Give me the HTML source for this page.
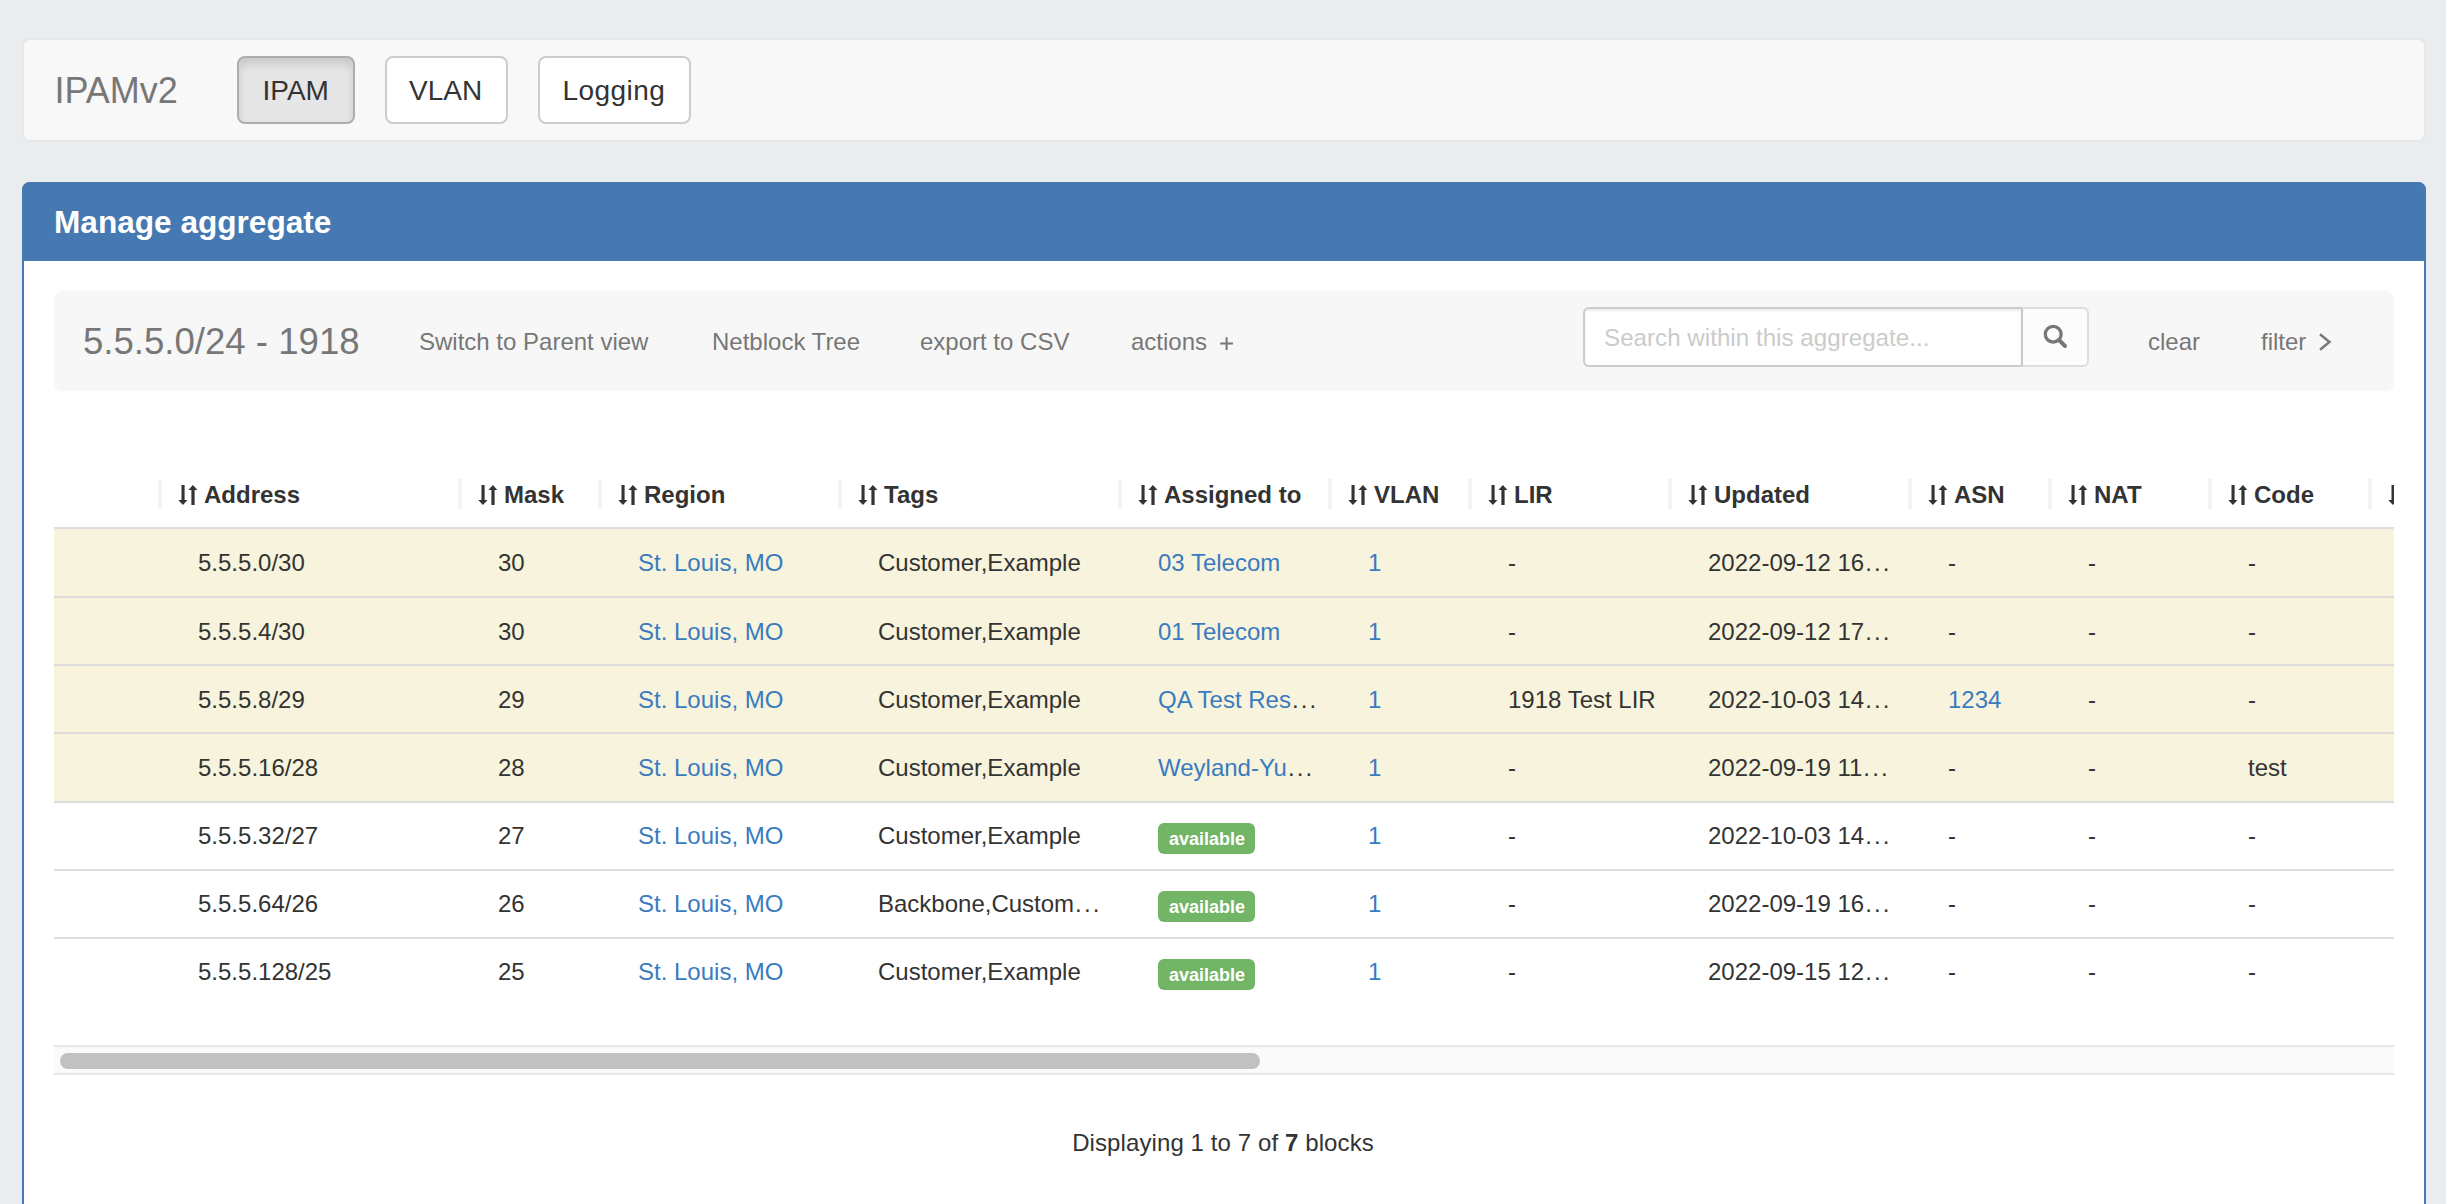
<!DOCTYPE html>
<html><head><meta charset="utf-8"><title>IPAMv2 - Manage aggregate</title>
<style>
html,body{margin:0;padding:0;}
body{width:2446px;height:1204px;overflow:hidden;background:#e9edf0;position:relative;font-family:'Liberation Sans', sans-serif;}
.box{position:absolute;box-sizing:border-box;}
.t{position:absolute;white-space:nowrap;font-family:'Liberation Sans', sans-serif;}
.btn{background:#fff;border:2px solid #ccc;border-radius:8px;}
.btnact{background:#e6e6e6;border:2px solid #adadad;border-radius:8px;box-shadow:inset 0 6px 10px rgba(0,0,0,.125);}
.badge{width:97px;height:31px;background:#72b566;border-radius:6px;}
svg{display:block}
</style></head><body>
<div class="box" style="left:22px;top:38px;width:2404px;height:104px;background:#f8f8f8;border:2px solid #e7e7e7;border-radius:8px;"></div>
<div class="t" style="left:54.5px;top:73.0px;font-size:36px;line-height:36px;color:#777;font-weight:normal;">IPAMv2</div>
<div class="box btnact" style="left:237px;top:56px;width:118px;height:68px;"></div>
<div class="t" style="left:262.5px;top:77.0px;font-size:28px;line-height:28px;color:#333;font-weight:normal;">IPAM</div>
<div class="box btn" style="left:385px;top:56px;width:123px;height:68px;"></div>
<div class="t" style="left:409.0px;top:77.0px;font-size:28px;line-height:28px;color:#333;font-weight:normal;">VLAN</div>
<div class="box btn" style="left:538px;top:56px;width:153px;height:68px;"></div>
<div class="t" style="left:562.5px;top:77.0px;font-size:28px;line-height:28px;color:#333;font-weight:normal;letter-spacing:0.45px;">Logging</div>
<div class="box" style="left:22px;top:182px;width:2404px;height:1100px;background:#fff;border:2px solid #4679b2;border-radius:8px;"></div>
<div class="box" style="left:22px;top:182px;width:2404px;height:79px;background:#4679b2;border-radius:8px 8px 0 0;"></div>
<div class="t" style="left:54.0px;top:207.0px;font-size:31.6px;line-height:31.6px;color:#fff;font-weight:bold;">Manage aggregate</div>
<div class="box" style="left:54px;top:291px;width:2340px;height:100px;background:#f7f7f7;border-radius:8px;"></div>
<div class="t" style="left:83.0px;top:324.0px;font-size:36.6px;line-height:36.6px;color:#777;font-weight:normal;">5.5.5.0/24 - 1918</div>
<div class="t" style="left:419.0px;top:330.0px;font-size:24px;line-height:24px;color:#777;font-weight:normal;">Switch to Parent view</div>
<div class="t" style="left:712.0px;top:330.0px;font-size:24px;line-height:24px;color:#777;font-weight:normal;">Netblock Tree</div>
<div class="t" style="left:920.0px;top:330.0px;font-size:24px;line-height:24px;color:#777;font-weight:normal;">export to CSV</div>
<div class="t" style="left:1131.0px;top:330.0px;font-size:24px;line-height:24px;color:#777;font-weight:normal;">actions</div>
<div class="t" style="left:2148.0px;top:330.0px;font-size:24px;line-height:24px;color:#777;font-weight:normal;">clear</div>
<div class="t" style="left:2261.0px;top:330.0px;font-size:24px;line-height:24px;color:#777;font-weight:normal;">filter</div>
<svg class="box" style="left:2316px;top:332px" width="18" height="20" viewBox="0 0 18 20"><path d="M4 2.2 L13.5 10 L4 17.8" fill="none" stroke="#777" stroke-width="2.4"/></svg>
<svg class="box" style="left:1219px;top:336px" width="16" height="16" viewBox="0 0 16 16"><path d="M1.2 7.5 H14 M7.6 1.3 V14" stroke="#777" stroke-width="2"/></svg>
<div class="box" style="left:1583px;top:307px;width:440px;height:60px;background:#fff;border:2px solid #ccc;border-radius:6px 0 0 6px;box-shadow:inset 0 2px 2px rgba(0,0,0,.075);"></div>
<div class="t" style="left:1604.0px;top:326.0px;font-size:24.2px;line-height:24.2px;color:#cbcbcb;font-weight:normal;">Search within this aggregate...</div>
<div class="box" style="left:2021px;top:307px;width:68px;height:60px;background:#fcfcfc;border:2px solid #ddd;border-left:2px solid #c8c8c8;border-radius:0 6px 6px 0;"></div>
<svg class="box" style="left:2038px;top:319px" width="32" height="34" viewBox="0 0 32 34"><circle cx="15.2" cy="15.2" r="7.9" fill="none" stroke="#777" stroke-width="3.3"/><path d="M21 21 L27 27" stroke="#777" stroke-width="3.9" stroke-linecap="round"/></svg>
<div class="box" style="left:54px;top:440px;width:2340px;height:640px;overflow:hidden;">
<div class="box" style="left:104px;top:39px;width:4px;height:30px;background:#f3f3f3;"></div>
<div class="box" style="left:124px;top:44px;width:20px;height:22px;"><svg width="20" height="22" viewBox="0 0 20 22"><rect x="3.5" y="1" width="3.1" height="15.5" fill="#333"/><polygon points="0.3,16 9.5,16 4.9,21" fill="#333"/><polygon points="10.4,6 19.4,6 14.9,1" fill="#333"/><rect x="13.4" y="5.5" width="3.2" height="15.5" fill="#333"/></svg></div>
<div class="t" style="left:150.0px;top:43.0px;font-size:24px;line-height:24px;color:#333;font-weight:bold;">Address</div>
<div class="box" style="left:404px;top:39px;width:4px;height:30px;background:#f3f3f3;"></div>
<div class="box" style="left:424px;top:44px;width:20px;height:22px;"><svg width="20" height="22" viewBox="0 0 20 22"><rect x="3.5" y="1" width="3.1" height="15.5" fill="#333"/><polygon points="0.3,16 9.5,16 4.9,21" fill="#333"/><polygon points="10.4,6 19.4,6 14.9,1" fill="#333"/><rect x="13.4" y="5.5" width="3.2" height="15.5" fill="#333"/></svg></div>
<div class="t" style="left:450.0px;top:43.0px;font-size:24px;line-height:24px;color:#333;font-weight:bold;">Mask</div>
<div class="box" style="left:544px;top:39px;width:4px;height:30px;background:#f3f3f3;"></div>
<div class="box" style="left:564px;top:44px;width:20px;height:22px;"><svg width="20" height="22" viewBox="0 0 20 22"><rect x="3.5" y="1" width="3.1" height="15.5" fill="#333"/><polygon points="0.3,16 9.5,16 4.9,21" fill="#333"/><polygon points="10.4,6 19.4,6 14.9,1" fill="#333"/><rect x="13.4" y="5.5" width="3.2" height="15.5" fill="#333"/></svg></div>
<div class="t" style="left:590.0px;top:43.0px;font-size:24px;line-height:24px;color:#333;font-weight:bold;">Region</div>
<div class="box" style="left:784px;top:39px;width:4px;height:30px;background:#f3f3f3;"></div>
<div class="box" style="left:804px;top:44px;width:20px;height:22px;"><svg width="20" height="22" viewBox="0 0 20 22"><rect x="3.5" y="1" width="3.1" height="15.5" fill="#333"/><polygon points="0.3,16 9.5,16 4.9,21" fill="#333"/><polygon points="10.4,6 19.4,6 14.9,1" fill="#333"/><rect x="13.4" y="5.5" width="3.2" height="15.5" fill="#333"/></svg></div>
<div class="t" style="left:830.0px;top:43.0px;font-size:24px;line-height:24px;color:#333;font-weight:bold;">Tags</div>
<div class="box" style="left:1064px;top:39px;width:4px;height:30px;background:#f3f3f3;"></div>
<div class="box" style="left:1084px;top:44px;width:20px;height:22px;"><svg width="20" height="22" viewBox="0 0 20 22"><rect x="3.5" y="1" width="3.1" height="15.5" fill="#333"/><polygon points="0.3,16 9.5,16 4.9,21" fill="#333"/><polygon points="10.4,6 19.4,6 14.9,1" fill="#333"/><rect x="13.4" y="5.5" width="3.2" height="15.5" fill="#333"/></svg></div>
<div class="t" style="left:1110.0px;top:43.0px;font-size:24px;line-height:24px;color:#333;font-weight:bold;">Assigned to</div>
<div class="box" style="left:1274px;top:39px;width:4px;height:30px;background:#f3f3f3;"></div>
<div class="box" style="left:1294px;top:44px;width:20px;height:22px;"><svg width="20" height="22" viewBox="0 0 20 22"><rect x="3.5" y="1" width="3.1" height="15.5" fill="#333"/><polygon points="0.3,16 9.5,16 4.9,21" fill="#333"/><polygon points="10.4,6 19.4,6 14.9,1" fill="#333"/><rect x="13.4" y="5.5" width="3.2" height="15.5" fill="#333"/></svg></div>
<div class="t" style="left:1320.0px;top:43.0px;font-size:24px;line-height:24px;color:#333;font-weight:bold;">VLAN</div>
<div class="box" style="left:1414px;top:39px;width:4px;height:30px;background:#f3f3f3;"></div>
<div class="box" style="left:1434px;top:44px;width:20px;height:22px;"><svg width="20" height="22" viewBox="0 0 20 22"><rect x="3.5" y="1" width="3.1" height="15.5" fill="#333"/><polygon points="0.3,16 9.5,16 4.9,21" fill="#333"/><polygon points="10.4,6 19.4,6 14.9,1" fill="#333"/><rect x="13.4" y="5.5" width="3.2" height="15.5" fill="#333"/></svg></div>
<div class="t" style="left:1460.0px;top:43.0px;font-size:24px;line-height:24px;color:#333;font-weight:bold;">LIR</div>
<div class="box" style="left:1614px;top:39px;width:4px;height:30px;background:#f3f3f3;"></div>
<div class="box" style="left:1634px;top:44px;width:20px;height:22px;"><svg width="20" height="22" viewBox="0 0 20 22"><rect x="3.5" y="1" width="3.1" height="15.5" fill="#333"/><polygon points="0.3,16 9.5,16 4.9,21" fill="#333"/><polygon points="10.4,6 19.4,6 14.9,1" fill="#333"/><rect x="13.4" y="5.5" width="3.2" height="15.5" fill="#333"/></svg></div>
<div class="t" style="left:1660.0px;top:43.0px;font-size:24px;line-height:24px;color:#333;font-weight:bold;">Updated</div>
<div class="box" style="left:1854px;top:39px;width:4px;height:30px;background:#f3f3f3;"></div>
<div class="box" style="left:1874px;top:44px;width:20px;height:22px;"><svg width="20" height="22" viewBox="0 0 20 22"><rect x="3.5" y="1" width="3.1" height="15.5" fill="#333"/><polygon points="0.3,16 9.5,16 4.9,21" fill="#333"/><polygon points="10.4,6 19.4,6 14.9,1" fill="#333"/><rect x="13.4" y="5.5" width="3.2" height="15.5" fill="#333"/></svg></div>
<div class="t" style="left:1900.0px;top:43.0px;font-size:24px;line-height:24px;color:#333;font-weight:bold;">ASN</div>
<div class="box" style="left:1994px;top:39px;width:4px;height:30px;background:#f3f3f3;"></div>
<div class="box" style="left:2014px;top:44px;width:20px;height:22px;"><svg width="20" height="22" viewBox="0 0 20 22"><rect x="3.5" y="1" width="3.1" height="15.5" fill="#333"/><polygon points="0.3,16 9.5,16 4.9,21" fill="#333"/><polygon points="10.4,6 19.4,6 14.9,1" fill="#333"/><rect x="13.4" y="5.5" width="3.2" height="15.5" fill="#333"/></svg></div>
<div class="t" style="left:2040.0px;top:43.0px;font-size:24px;line-height:24px;color:#333;font-weight:bold;">NAT</div>
<div class="box" style="left:2154px;top:39px;width:4px;height:30px;background:#f3f3f3;"></div>
<div class="box" style="left:2174px;top:44px;width:20px;height:22px;"><svg width="20" height="22" viewBox="0 0 20 22"><rect x="3.5" y="1" width="3.1" height="15.5" fill="#333"/><polygon points="0.3,16 9.5,16 4.9,21" fill="#333"/><polygon points="10.4,6 19.4,6 14.9,1" fill="#333"/><rect x="13.4" y="5.5" width="3.2" height="15.5" fill="#333"/></svg></div>
<div class="t" style="left:2200.0px;top:43.0px;font-size:24px;line-height:24px;color:#333;font-weight:bold;">Code</div>
<div class="box" style="left:2314px;top:39px;width:4px;height:30px;background:#f3f3f3;"></div>
<div class="box" style="left:2334px;top:44px;width:20px;height:22px;"><svg width="20" height="22" viewBox="0 0 20 22"><rect x="3.5" y="1" width="3.1" height="15.5" fill="#333"/><polygon points="0.3,16 9.5,16 4.9,21" fill="#333"/><polygon points="10.4,6 19.4,6 14.9,1" fill="#333"/><rect x="13.4" y="5.5" width="3.2" height="15.5" fill="#333"/></svg></div>
<div class="box" style="left:0;top:87px;width:2340px;height:2px;background:#ddd;"></div>
<div class="box" style="left:0;top:89px;width:2340px;height:67px;background:#f7f3dc;"></div>
<div class="box" style="left:0;top:158px;width:2340px;height:66px;background:#f7f3dc;"></div>
<div class="box" style="left:0;top:226px;width:2340px;height:66px;background:#f7f3dc;"></div>
<div class="box" style="left:0;top:294px;width:2340px;height:67px;background:#f7f3dc;"></div>
<div class="box" style="left:0;top:156px;width:2340px;height:2px;background:#ddd;"></div>
<div class="box" style="left:0;top:224px;width:2340px;height:2px;background:#ddd;"></div>
<div class="box" style="left:0;top:292px;width:2340px;height:2px;background:#ddd;"></div>
<div class="box" style="left:0;top:361px;width:2340px;height:2px;background:#ddd;"></div>
<div class="box" style="left:0;top:429px;width:2340px;height:2px;background:#ddd;"></div>
<div class="box" style="left:0;top:497px;width:2340px;height:2px;background:#ddd;"></div>
<div class="t" style="left:144.0px;top:111.0px;font-size:24px;line-height:24px;color:#333;font-weight:normal;">5.5.5.0/30</div>
<div class="t" style="left:444.0px;top:111.0px;font-size:24px;line-height:24px;color:#333;font-weight:normal;">30</div>
<div class="t" style="left:584.0px;top:111.0px;font-size:24px;line-height:24px;color:#3a7bbf;font-weight:normal;">St. Louis, MO</div>
<div class="t" style="left:824.0px;top:111.0px;font-size:24px;line-height:24px;color:#333;font-weight:normal;">Customer,Example</div>
<div class="t" style="left:1104.0px;top:111.0px;font-size:24px;line-height:24px;color:#3a7bbf;font-weight:normal;">03 Telecom</div>
<div class="t" style="left:1314.0px;top:111.0px;font-size:24px;line-height:24px;color:#3a7bbf;font-weight:normal;">1</div>
<div class="t" style="left:1454.0px;top:111.0px;font-size:24px;line-height:24px;color:#333;font-weight:normal;">-</div>
<div class="t" style="left:1654.0px;top:111.0px;font-size:24px;line-height:24px;color:#333;font-weight:normal;">2022-09-12 16<span style="letter-spacing:2.1px;margin-left:1px;color:#333">...</span></div>
<div class="t" style="left:1894.0px;top:111.0px;font-size:24px;line-height:24px;color:#333;font-weight:normal;">-</div>
<div class="t" style="left:2034.0px;top:111.0px;font-size:24px;line-height:24px;color:#333;font-weight:normal;">-</div>
<div class="t" style="left:2194.0px;top:111.0px;font-size:24px;line-height:24px;color:#333;font-weight:normal;">-</div>
<div class="t" style="left:144.0px;top:180.0px;font-size:24px;line-height:24px;color:#333;font-weight:normal;">5.5.5.4/30</div>
<div class="t" style="left:444.0px;top:180.0px;font-size:24px;line-height:24px;color:#333;font-weight:normal;">30</div>
<div class="t" style="left:584.0px;top:180.0px;font-size:24px;line-height:24px;color:#3a7bbf;font-weight:normal;">St. Louis, MO</div>
<div class="t" style="left:824.0px;top:180.0px;font-size:24px;line-height:24px;color:#333;font-weight:normal;">Customer,Example</div>
<div class="t" style="left:1104.0px;top:180.0px;font-size:24px;line-height:24px;color:#3a7bbf;font-weight:normal;">01 Telecom</div>
<div class="t" style="left:1314.0px;top:180.0px;font-size:24px;line-height:24px;color:#3a7bbf;font-weight:normal;">1</div>
<div class="t" style="left:1454.0px;top:180.0px;font-size:24px;line-height:24px;color:#333;font-weight:normal;">-</div>
<div class="t" style="left:1654.0px;top:180.0px;font-size:24px;line-height:24px;color:#333;font-weight:normal;">2022-09-12 17<span style="letter-spacing:2.1px;margin-left:1px;color:#333">...</span></div>
<div class="t" style="left:1894.0px;top:180.0px;font-size:24px;line-height:24px;color:#333;font-weight:normal;">-</div>
<div class="t" style="left:2034.0px;top:180.0px;font-size:24px;line-height:24px;color:#333;font-weight:normal;">-</div>
<div class="t" style="left:2194.0px;top:180.0px;font-size:24px;line-height:24px;color:#333;font-weight:normal;">-</div>
<div class="t" style="left:144.0px;top:248.0px;font-size:24px;line-height:24px;color:#333;font-weight:normal;">5.5.5.8/29</div>
<div class="t" style="left:444.0px;top:248.0px;font-size:24px;line-height:24px;color:#333;font-weight:normal;">29</div>
<div class="t" style="left:584.0px;top:248.0px;font-size:24px;line-height:24px;color:#3a7bbf;font-weight:normal;">St. Louis, MO</div>
<div class="t" style="left:824.0px;top:248.0px;font-size:24px;line-height:24px;color:#333;font-weight:normal;">Customer,Example</div>
<div class="t" style="left:1104.0px;top:248.0px;font-size:24px;line-height:24px;color:#3a7bbf;font-weight:normal;">QA Test Res<span style="letter-spacing:2.1px;margin-left:1px;color:#333">...</span></div>
<div class="t" style="left:1314.0px;top:248.0px;font-size:24px;line-height:24px;color:#3a7bbf;font-weight:normal;">1</div>
<div class="t" style="left:1454.0px;top:248.0px;font-size:24px;line-height:24px;color:#333;font-weight:normal;">1918 Test LIR</div>
<div class="t" style="left:1654.0px;top:248.0px;font-size:24px;line-height:24px;color:#333;font-weight:normal;">2022-10-03 14<span style="letter-spacing:2.1px;margin-left:1px;color:#333">...</span></div>
<div class="t" style="left:1894.0px;top:248.0px;font-size:24px;line-height:24px;color:#3a7bbf;font-weight:normal;">1234</div>
<div class="t" style="left:2034.0px;top:248.0px;font-size:24px;line-height:24px;color:#333;font-weight:normal;">-</div>
<div class="t" style="left:2194.0px;top:248.0px;font-size:24px;line-height:24px;color:#333;font-weight:normal;">-</div>
<div class="t" style="left:144.0px;top:316.0px;font-size:24px;line-height:24px;color:#333;font-weight:normal;">5.5.5.16/28</div>
<div class="t" style="left:444.0px;top:316.0px;font-size:24px;line-height:24px;color:#333;font-weight:normal;">28</div>
<div class="t" style="left:584.0px;top:316.0px;font-size:24px;line-height:24px;color:#3a7bbf;font-weight:normal;">St. Louis, MO</div>
<div class="t" style="left:824.0px;top:316.0px;font-size:24px;line-height:24px;color:#333;font-weight:normal;">Customer,Example</div>
<div class="t" style="left:1104.0px;top:316.0px;font-size:24px;line-height:24px;color:#3a7bbf;font-weight:normal;">Weyland-Yu<span style="letter-spacing:2.1px;margin-left:1px;color:#333">...</span></div>
<div class="t" style="left:1314.0px;top:316.0px;font-size:24px;line-height:24px;color:#3a7bbf;font-weight:normal;">1</div>
<div class="t" style="left:1454.0px;top:316.0px;font-size:24px;line-height:24px;color:#333;font-weight:normal;">-</div>
<div class="t" style="left:1654.0px;top:316.0px;font-size:24px;line-height:24px;color:#333;font-weight:normal;">2022-09-19 11<span style="letter-spacing:2.1px;margin-left:1px;color:#333">...</span></div>
<div class="t" style="left:1894.0px;top:316.0px;font-size:24px;line-height:24px;color:#333;font-weight:normal;">-</div>
<div class="t" style="left:2034.0px;top:316.0px;font-size:24px;line-height:24px;color:#333;font-weight:normal;">-</div>
<div class="t" style="left:2194.0px;top:316.0px;font-size:24px;line-height:24px;color:#333;font-weight:normal;">test</div>
<div class="t" style="left:144.0px;top:384.0px;font-size:24px;line-height:24px;color:#333;font-weight:normal;">5.5.5.32/27</div>
<div class="t" style="left:444.0px;top:384.0px;font-size:24px;line-height:24px;color:#333;font-weight:normal;">27</div>
<div class="t" style="left:584.0px;top:384.0px;font-size:24px;line-height:24px;color:#3a7bbf;font-weight:normal;">St. Louis, MO</div>
<div class="t" style="left:824.0px;top:384.0px;font-size:24px;line-height:24px;color:#333;font-weight:normal;">Customer,Example</div>
<div class="box badge" style="left:1104px;top:383px;"></div>
<div class="t" style="left:1115.0px;top:390.0px;font-size:18px;line-height:18px;color:#fff;font-weight:bold;">available</div>
<div class="t" style="left:1314.0px;top:384.0px;font-size:24px;line-height:24px;color:#3a7bbf;font-weight:normal;">1</div>
<div class="t" style="left:1454.0px;top:384.0px;font-size:24px;line-height:24px;color:#333;font-weight:normal;">-</div>
<div class="t" style="left:1654.0px;top:384.0px;font-size:24px;line-height:24px;color:#333;font-weight:normal;">2022-10-03 14<span style="letter-spacing:2.1px;margin-left:1px;color:#333">...</span></div>
<div class="t" style="left:1894.0px;top:384.0px;font-size:24px;line-height:24px;color:#333;font-weight:normal;">-</div>
<div class="t" style="left:2034.0px;top:384.0px;font-size:24px;line-height:24px;color:#333;font-weight:normal;">-</div>
<div class="t" style="left:2194.0px;top:384.0px;font-size:24px;line-height:24px;color:#333;font-weight:normal;">-</div>
<div class="t" style="left:144.0px;top:452.0px;font-size:24px;line-height:24px;color:#333;font-weight:normal;">5.5.5.64/26</div>
<div class="t" style="left:444.0px;top:452.0px;font-size:24px;line-height:24px;color:#333;font-weight:normal;">26</div>
<div class="t" style="left:584.0px;top:452.0px;font-size:24px;line-height:24px;color:#3a7bbf;font-weight:normal;">St. Louis, MO</div>
<div class="t" style="left:824.0px;top:452.0px;font-size:24px;line-height:24px;color:#333;font-weight:normal;">Backbone,Custom<span style="letter-spacing:2.1px;margin-left:1px;color:#333">...</span></div>
<div class="box badge" style="left:1104px;top:451px;"></div>
<div class="t" style="left:1115.0px;top:458.0px;font-size:18px;line-height:18px;color:#fff;font-weight:bold;">available</div>
<div class="t" style="left:1314.0px;top:452.0px;font-size:24px;line-height:24px;color:#3a7bbf;font-weight:normal;">1</div>
<div class="t" style="left:1454.0px;top:452.0px;font-size:24px;line-height:24px;color:#333;font-weight:normal;">-</div>
<div class="t" style="left:1654.0px;top:452.0px;font-size:24px;line-height:24px;color:#333;font-weight:normal;">2022-09-19 16<span style="letter-spacing:2.1px;margin-left:1px;color:#333">...</span></div>
<div class="t" style="left:1894.0px;top:452.0px;font-size:24px;line-height:24px;color:#333;font-weight:normal;">-</div>
<div class="t" style="left:2034.0px;top:452.0px;font-size:24px;line-height:24px;color:#333;font-weight:normal;">-</div>
<div class="t" style="left:2194.0px;top:452.0px;font-size:24px;line-height:24px;color:#333;font-weight:normal;">-</div>
<div class="t" style="left:144.0px;top:520.0px;font-size:24px;line-height:24px;color:#333;font-weight:normal;">5.5.5.128/25</div>
<div class="t" style="left:444.0px;top:520.0px;font-size:24px;line-height:24px;color:#333;font-weight:normal;">25</div>
<div class="t" style="left:584.0px;top:520.0px;font-size:24px;line-height:24px;color:#3a7bbf;font-weight:normal;">St. Louis, MO</div>
<div class="t" style="left:824.0px;top:520.0px;font-size:24px;line-height:24px;color:#333;font-weight:normal;">Customer,Example</div>
<div class="box badge" style="left:1104px;top:519px;"></div>
<div class="t" style="left:1115.0px;top:526.0px;font-size:18px;line-height:18px;color:#fff;font-weight:bold;">available</div>
<div class="t" style="left:1314.0px;top:520.0px;font-size:24px;line-height:24px;color:#3a7bbf;font-weight:normal;">1</div>
<div class="t" style="left:1454.0px;top:520.0px;font-size:24px;line-height:24px;color:#333;font-weight:normal;">-</div>
<div class="t" style="left:1654.0px;top:520.0px;font-size:24px;line-height:24px;color:#333;font-weight:normal;">2022-09-15 12<span style="letter-spacing:2.1px;margin-left:1px;color:#333">...</span></div>
<div class="t" style="left:1894.0px;top:520.0px;font-size:24px;line-height:24px;color:#333;font-weight:normal;">-</div>
<div class="t" style="left:2034.0px;top:520.0px;font-size:24px;line-height:24px;color:#333;font-weight:normal;">-</div>
<div class="t" style="left:2194.0px;top:520.0px;font-size:24px;line-height:24px;color:#333;font-weight:normal;">-</div>
</div>
<div class="box" style="left:54px;top:1045px;width:2340px;height:30px;background:#fafafa;border-top:2px solid #e8e8e8;border-bottom:2px solid #e8e8e8;box-sizing:border-box;"></div>
<div class="box" style="left:60px;top:1053px;width:1200px;height:16px;background:#c1c1c1;border-radius:8px;"></div>
<div class="t" style="left:0;width:2446px;text-align:center;top:1131px;font-size:24px;line-height:24px;color:#333;letter-spacing:0.1px;">Displaying 1 to 7 of <b>7</b> blocks</div>
</body></html>
